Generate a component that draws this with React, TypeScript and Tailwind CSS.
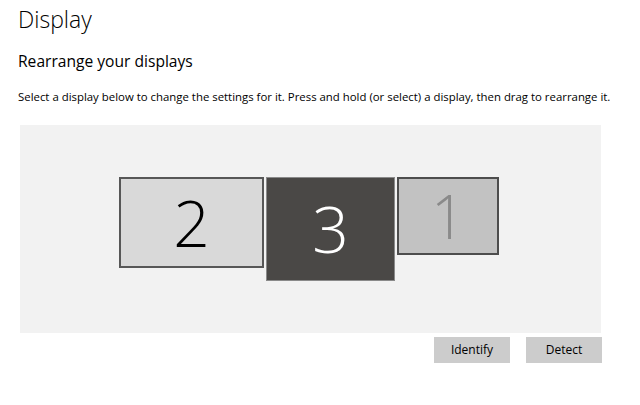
import React from "react";

export default function App() {
  return (
    <div className="w-[640px] h-[405px] bg-white overflow-hidden" style={{ fontFamily: "'Open Sans', 'Noto Sans', sans-serif" }}>
      <div className="pl-[18px] pt-[3px]">
        <h1 className="text-[23px] leading-[32px] font-light text-black">Display</h1>
        <h2 className="mt-[15px] text-[15.6px] leading-[22px] font-normal text-black">Rearrange your displays</h2>
        <p className="mt-[17px] text-[11.4px] leading-[16px] text-black">
          Select a display below to change the settings for it. Press and hold (or select) a display, then drag to rearrange it.
        </p>
      </div>
      <div className="ml-[20px] mt-[20px] w-[581px] h-[208px] bg-[#f2f2f2] relative">
        <div className="absolute left-[99px] top-[52px] w-[145px] h-[91px] bg-[#d9d9d9] border-2 border-[#575757] flex items-center justify-center">
          <span className="text-[64px] font-light leading-none text-black">2</span>
        </div>
        <div className="absolute left-[246px] top-[52px] w-[129px] h-[104px] bg-[#4a4846] border border-[#8a8a8a] flex items-center justify-center">
          <span className="text-[64px] font-light leading-none text-white">3</span>
        </div>
        <div className="absolute left-[377px] top-[52px] w-[102px] h-[78px] bg-[#c2c2c2] border-2 border-[#4d4d4d] flex items-center justify-center">
          <span className="text-[60px] font-light leading-none text-[#8a8a8a]">1</span>
        </div>
      </div>
      <div className="ml-[20px] w-[582px] mt-[4px] flex justify-end gap-[16px]">
        <button className="w-[76px] h-[26px] bg-[#cccccc] text-[12px] text-black">Identify</button>
        <button className="w-[76px] h-[26px] bg-[#cccccc] text-[12px] text-black">Detect</button>
      </div>
    </div>
  );
}
